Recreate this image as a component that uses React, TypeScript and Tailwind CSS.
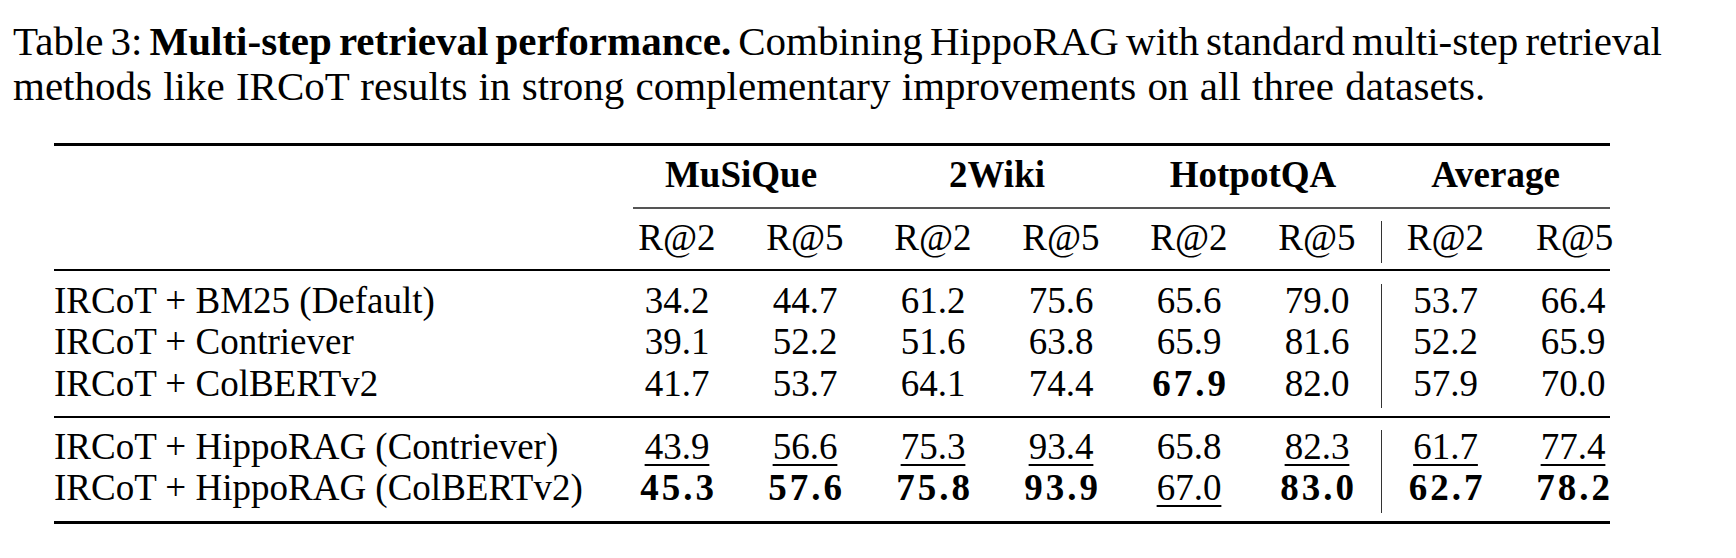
type Cell = string;

const groupOne: Cell[][] = [
  ["IRCoT + BM25 (Default)", "34.2", "44.7", "61.2", "75.6", "65.6", "79.0", "53.7", "66.4"],
  ["IRCoT + Contriever", "39.1", "52.2", "51.6", "63.8", "65.9", "81.6", "52.2", "65.9"],
  ["IRCoT + ColBERTv2", "41.7", "53.7", "64.1", "74.4", "b:67.9", "82.0", "57.9", "70.0"],
];

const groupTwo: Cell[][] = [
  ["IRCoT + HippoRAG (Contriever)", "u:43.9", "u:56.6", "u:75.3", "u:93.4", "65.8", "u:82.3", "u:61.7", "u:77.4"],
  ["IRCoT + HippoRAG (ColBERTv2)", "b:45.3", "b:57.6", "b:75.8", "b:93.9", "u:67.0", "b:83.0", "b:62.7", "b:78.2"],
];

const rowGrid =
  "grid grid-cols-[559px_repeat(6,128px)_128px_101px] h-[41.5px] leading-[33px]";

function Num({ value }: { value: string }) {
  if (value.startsWith("b:")) {
    return (
      <span className="font-bold tracking-[3px] mr-[-3px]">{value.slice(2)}</span>
    );
  }
  if (value.startsWith("u:")) {
    return (
      <span className="underline decoration-[1.5px] underline-offset-[5px]">
        {value.slice(2)}
      </span>
    );
  }
  return <span>{value}</span>;
}

function cellClass(i: number) {
  if (i === 6) return "text-center border-l-[1.5px] border-[#333]";
  if (i === 7) return "text-center pl-[27px]";
  return "text-center";
}

function Row({ row }: { row: Cell[] }) {
  const [label, ...nums] = row;
  return (
    <div className={rowGrid}>
      <div className="whitespace-nowrap">{label}</div>
      {nums.map((n, i) => (
        <div key={i} className={cellClass(i)}>
          <Num value={n} />
        </div>
      ))}
    </div>
  );
}

export default function App() {
  const metrics = ["R@2", "R@5", "R@2", "R@5", "R@2", "R@5", "R@2", "R@5"];
  return (
    <div className="w-[1736px] h-[558px] bg-white text-black font-['Liberation_Serif',serif] overflow-hidden">
      <div className="ml-[13px] pt-[19px] w-[1649px] text-[41px] leading-[45px]">
        <p className="text-justify [text-align-last:justify] whitespace-nowrap [word-spacing:-4px]">
          Table 3: <b>Multi-step retrieval performance.</b> Combining HippoRAG
          with standard multi-step retrieval
        </p>
        <p className="whitespace-nowrap [word-spacing:1px]">
          methods like IRCoT results in strong complementary improvements on all
          three datasets.
        </p>
      </div>

      <div className="ml-[54px] mt-[34px] w-[1556px] text-[37px]">
        <div className="h-[3px] bg-black" />

        {/* dataset headers */}
        <div className={`${rowGrid} mt-[12px] font-bold`}>
          <div />
          <div className="col-span-2 text-center">MuSiQue</div>
          <div className="col-span-2 text-center">2Wiki</div>
          <div className="col-span-2 text-center">HotpotQA</div>
          <div className="col-span-2 text-center">Average</div>
        </div>
        <div className="ml-[579px] mt-[7.5px] h-[2px] bg-[#555]" />
        <div className={`${rowGrid} mt-[12px]`}>
          <div />
          {metrics.map((m, i) => (
            <div key={i} className={cellClass(i)}>
              {m}
            </div>
          ))}
        </div>
        <div className="mt-[6.5px] h-[2px] bg-black" />

        <div className="mt-[12.5px]">
          {groupOne.map((r, i) => (
            <Row key={i} row={r} />
          ))}
        </div>
        <div className="mt-[8px] h-[2px] bg-black" />

        <div className="mt-[11.5px]">
          {groupTwo.map((r, i) => (
            <Row key={i} row={r} />
          ))}
        </div>
        <div className="mt-[8px] h-[3px] bg-black" />
      </div>
    </div>
  );
}
